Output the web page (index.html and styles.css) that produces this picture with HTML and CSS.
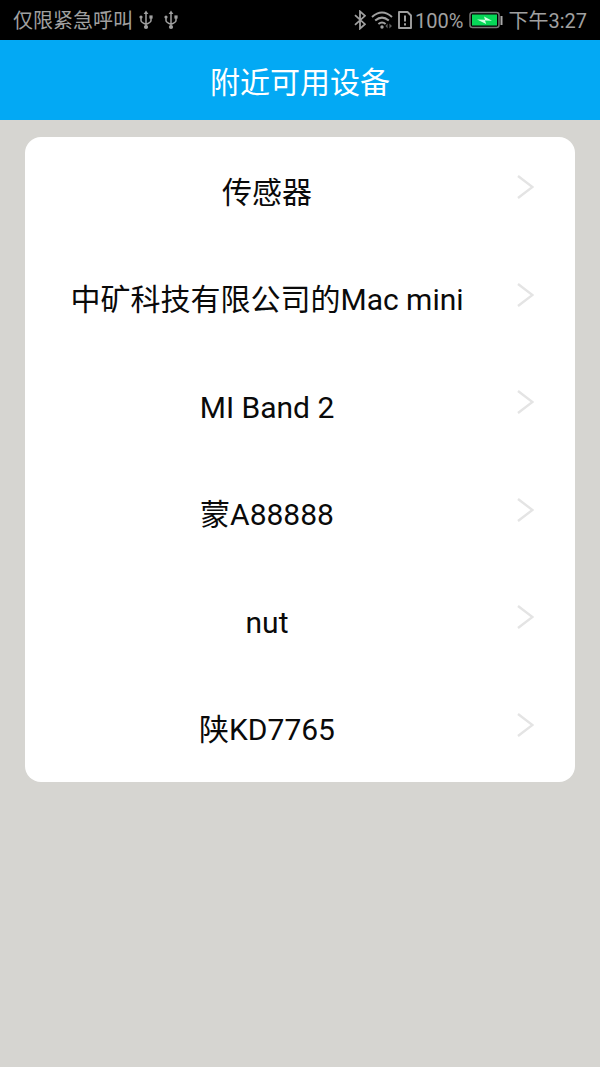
FILE: index.html
```html
<!DOCTYPE html>
<html lang="zh-CN">
<head>
<meta charset="utf-8">
<meta name="viewport" content="width=device-width, initial-scale=1">
<title>附近可用设备</title>
<link rel="stylesheet" href="styles.css">
</head>
<body>
<svg class="defs" aria-hidden="true">
  <symbol id="usb" viewBox="0 0 14 20">
    <path d="M7 3v14M2 7v3.5q0 2 5 3.7M12 7v3.5q0 2-5 3.7" fill="none" stroke="currentColor" stroke-width="1.5"/>
    <path d="M7 0.5l2.4 3.6H4.6z" fill="currentColor"/>
    <circle cx="2" cy="7" r="1.6" fill="currentColor"/>
    <path d="M10.4 5.4h3.2v3.2h-3.2z" fill="currentColor"/>
    <circle cx="7" cy="17" r="2.1" fill="currentColor"/>
  </symbol>
  <symbol id="chevron" viewBox="0 0 17 24">
    <path d="M1 1l14.5 11L1 23" fill="none" stroke="currentColor" stroke-width="2.4"/>
  </symbol>
</svg>
<header class="status">
  <div class="status-left">
    <span>仅限紧急呼叫</span>
    <svg class="usb"><use href="#usb"/></svg>
    <svg class="usb"><use href="#usb"/></svg>
  </div>
  <div class="status-right">
    <svg class="bluetooth" viewBox="0 0 12 20"><path d="M1 5.2l10 9L6 18.6V1.4l5 4.4-10 9" fill="none" stroke="currentColor" stroke-width="1.8"/></svg>
    <svg class="wifi" viewBox="0 0 22 20">
      <path d="M1 7q10-9 20 0M4.2 10.6q6.8-6 13.6 0M7.4 14q3.6-3 7.2 0" fill="none" stroke="currentColor" stroke-width="2"/>
      <circle cx="11" cy="17" r="1.7" fill="currentColor"/>
      <path d="M16.6 13.5v5l-2.2-2.5zM18.4 13.5v5l2.6-2.5z" fill="currentColor" opacity=".6"/>
    </svg>
    <svg class="sim" viewBox="0 0 14 20">
      <path d="M1 2h8.5L13 5.5V18H1z" fill="none" stroke="currentColor" stroke-width="1.9" stroke-linejoin="round"/>
      <path d="M7 5.5v6M7 13.2v2.2" stroke="currentColor" stroke-width="2"/>
    </svg>
    <span class="percent">100%</span>
    <svg class="battery" viewBox="0 0 34 18">
      <rect x="1" y="1.5" width="29" height="15" rx="2.5" fill="none" stroke="#777" stroke-width="1.5"/>
      <rect x="3" y="3.5" width="25" height="11" fill="#07d858"/>
      <path d="M8 8.5l8 .2-1-3.2 8 4.3-7-.3 1.2 3.5z" fill="#d5ffe4"/>
      <path d="M31.5 5h2v9h-2z" fill="#aaa"/>
    </svg>
    <time>下午3:27</time>
  </div>
</header>
<h1 class="title">附近可用设备</h1>
<main class="content">
  <ul class="devices">
    <li><button class="device"><span class="name">传感器</span><svg class="chevron"><use href="#chevron"/></svg></button></li>
    <li><button class="device"><span class="name">中矿科技有限公司的Mac mini</span><svg class="chevron"><use href="#chevron"/></svg></button></li>
    <li><button class="device"><span class="name">MI Band 2</span><svg class="chevron"><use href="#chevron"/></svg></button></li>
    <li><button class="device"><span class="name">蒙A88888</span><svg class="chevron"><use href="#chevron"/></svg></button></li>
    <li><button class="device"><span class="name">nut</span><svg class="chevron"><use href="#chevron"/></svg></button></li>
    <li><button class="device"><span class="name">陕KD7765</span><svg class="chevron"><use href="#chevron"/></svg></button></li>
  </ul>
</main>
</body>
</html>
```
FILE: styles.css
```css
* {
  box-sizing: border-box;
}

body {
  margin: 0;
  min-height: 100vh;
  background: #d6d5d1;
  color: #0a0a0a;
  font-family: Roboto, "Noto Sans CJK SC", sans-serif;
}

.defs {
  display: none;
}

.status {
  display: flex;
  justify-content: space-between;
  align-items: center;
  height: 40px;
  padding: 2px 13px 0;
  background: #000;
  color: #a0a0a0;
  font-size: 20px;
  line-height: 28px;
}

.status-left,
.status-right {
  display: flex;
  align-items: center;
}

.status svg {
  margin-bottom: 2px;
}

.usb {
  width: 14px;
  height: 20px;
  margin-left: 6px;
}

.usb + .usb {
  margin-left: 11px;
}

.bluetooth {
  width: 12px;
  height: 20px;
}

.wifi {
  width: 22px;
  height: 20px;
  margin-left: 5px;
}

.sim {
  width: 14px;
  height: 20px;
  margin-left: 5px;
}

.percent {
  margin-left: 3px;
}

.battery {
  width: 34px;
  height: 18px;
  margin: 0 5px 0 6px;
}

.title {
  margin: 0;
  padding-top: 5px;
  background: #03a9f4;
  color: #fff;
  font-size: 30px;
  font-weight: 400;
  line-height: 75px;
  text-align: center;
}

.content {
  padding: 17px 25px;
}

.devices {
  display: grid;
  grid-auto-rows: 1fr;
  min-height: 645px;
  margin: 0;
  padding: 0;
  border-radius: 16px;
  background: #fff;
  list-style: none;
}

.device {
  display: flex;
  align-items: center;
  gap: 8px;
  width: 100%;
  height: 100%;
  padding: 4px 41px 0 0;
  border: 0;
  background: none;
  color: inherit;
  font: inherit;
  font-size: 30px;
  line-height: 44px;
}

.name {
  flex: 1;
  text-align: center;
}

.chevron {
  width: 17px;
  height: 24px;
  margin-bottom: 11px;
  color: #e4e4e4;
}
```
